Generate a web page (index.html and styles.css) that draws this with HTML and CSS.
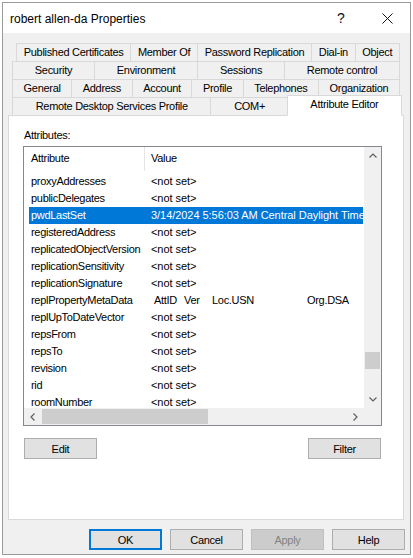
FILE: index.html
```html
<!DOCTYPE html>
<html lang="en">
  <head>
    <meta charset="UTF-8" />
    <meta name="viewport" content="width=device-width, initial-scale=1.0" />
    <title>robert allen-da Properties</title>
    <link rel="stylesheet" href="styles.css">
  </head>
  <body>
    <div class="behind"><span>Users</span></div>
    <div class="window">
      <div class="titlebar">
        <span class="title">robert allen-da Properties</span>
        <span class="caption-btn">?</span>
        <span class="caption-btn">
          <svg width="11" height="11" viewBox="0 0 11 11">
            <path d="M0.5 0.5 L10.5 10.5 M10.5 0.5 L0.5 10.5" stroke="#111" stroke-width="1" fill="none" />
          </svg>
        </span>
      </div>

      <div class="dialog">
        <div class="tabs">
          <div class="tab-row row-top">
            <div class="tab">Published Certificates</div>
            <div class="tab">Member Of</div>
            <div class="tab">Password Replication</div>
            <div class="tab">Dial-in</div>
            <div class="tab">Object</div>
          </div>
          <div class="tab-row">
            <div class="tab">Security</div>
            <div class="tab">Environment</div>
            <div class="tab">Sessions</div>
            <div class="tab">Remote control</div>
          </div>
          <div class="tab-row">
            <div class="tab">General</div>
            <div class="tab">Address</div>
            <div class="tab">Account</div>
            <div class="tab">Profile</div>
            <div class="tab">Telephones</div>
            <div class="tab">Organization</div>
          </div>
          <div class="tab-row">
            <div class="tab">Remote Desktop Services Profile</div>
            <div class="tab">COM+</div>
            <div class="tab active">Attribute Editor</div>
          </div>
        </div>

        <div class="panel">
          <div class="field-label">Attributes:</div>
          <div class="listbox">
            <div class="viewport">
              <div class="list-header">
                <div class="head-attr">Attribute</div>
                <div class="head-value">Value</div>
              </div>
              <div class="list-row"><span class="cell-attr">proxyAddresses</span><span class="cell-value">&lt;not set&gt;</span></div>
              <div class="list-row"><span class="cell-attr">publicDelegates</span><span class="cell-value">&lt;not set&gt;</span></div>
              <div class="list-row selected"><span class="cell-attr">pwdLastSet</span><span class="cell-value">3/14/2024 5:56:03 AM Central Daylight Time</span></div>
              <div class="list-row"><span class="cell-attr">registeredAddress</span><span class="cell-value">&lt;not set&gt;</span></div>
              <div class="list-row"><span class="cell-attr">replicatedObjectVersion</span><span class="cell-value">&lt;not set&gt;</span></div>
              <div class="list-row"><span class="cell-attr">replicationSensitivity</span><span class="cell-value">&lt;not set&gt;</span></div>
              <div class="list-row"><span class="cell-attr">replicationSignature</span><span class="cell-value">&lt;not set&gt;</span></div>
              <div class="list-row">
                <span class="cell-attr">replPropertyMetaData</span>
                <span class="cell-value meta">
                  <span class="meta-id">AttID</span><span class="meta-ver">Ver</span><span class="meta-usn">Loc.USN</span><span>Org.DSA</span>
                </span>
              </div>
              <div class="list-row"><span class="cell-attr">replUpToDateVector</span><span class="cell-value">&lt;not set&gt;</span></div>
              <div class="list-row"><span class="cell-attr">repsFrom</span><span class="cell-value">&lt;not set&gt;</span></div>
              <div class="list-row"><span class="cell-attr">repsTo</span><span class="cell-value">&lt;not set&gt;</span></div>
              <div class="list-row"><span class="cell-attr">revision</span><span class="cell-value">&lt;not set&gt;</span></div>
              <div class="list-row"><span class="cell-attr">rid</span><span class="cell-value">&lt;not set&gt;</span></div>
              <div class="list-row"><span class="cell-attr">roomNumber</span><span class="cell-value">&lt;not set&gt;</span></div>
            </div>

            <div class="vscroll">
              <div class="arrow">
                <svg width="8" height="5" viewBox="0 0 8 5"><polyline points="0.5,4.5 4,1 7.5,4.5" fill="none" stroke="#606060" stroke-width="1.2" /></svg>
              </div>
              <div class="track">
                <div class="thumb" style="margin-top: 188px"></div>
              </div>
              <div class="arrow">
                <svg width="8" height="5" viewBox="0 0 8 5"><polyline points="0.5,0.5 4,4 7.5,0.5" fill="none" stroke="#606060" stroke-width="1.2" /></svg>
              </div>
            </div>

            <div class="hscroll">
              <div class="arrow">
                <svg width="5" height="8" viewBox="0 0 5 8"><polyline points="4.5,0.5 1,4 4.5,7.5" fill="none" stroke="#606060" stroke-width="1.2" /></svg>
              </div>
              <div class="track">
                <div class="thumb" style="width: 166px"></div>
              </div>
              <div class="arrow">
                <svg width="5" height="8" viewBox="0 0 5 8"><polyline points="0.5,0.5 4,4 0.5,7.5" fill="none" stroke="#606060" stroke-width="1.2" /></svg>
              </div>
            </div>

            <div class="corner"></div>
          </div>

          <div class="panel-actions">
            <button class="btn">Edit</button>
            <button class="btn">Filter</button>
          </div>
        </div>

        <div class="dialog-actions">
          <button class="btn default">OK</button>
          <button class="btn">Cancel</button>
          <button class="btn" disabled>Apply</button>
          <button class="btn">Help</button>
        </div>
      </div>
    </div>
  </body>
</html>
```

FILE: styles.css
```css
* {
  box-sizing: border-box;
}

body {
  margin: 0;
  background-color: #ffffff;
  font-family: "Liberation Sans", Arial, sans-serif;
  font-size: 11px;
  letter-spacing: -0.3px;
  color: #000000;
}

.behind {
  height: 2px;
  overflow: hidden;
  padding-left: 137px;
}

.behind span {
  display: block;
  margin-top: -11px;
  font-size: 12px;
  line-height: 14px;
  color: #333333;
}

.window {
  margin: 0 2px 0 2px;
  border: 1px solid #9a9a9a;
  background-color: #f0f0f0;
}

/* title bar */
.titlebar {
  display: flex;
  align-items: center;
  height: 30px;
  background-color: #ffffff;
}

.title {
  flex: 1;
  padding-left: 7px;
  padding-top: 1px;
  font-size: 12px;
  letter-spacing: 0;
  color: #000000;
}

.caption-btn {
  display: flex;
  align-items: center;
  justify-content: center;
  width: 46px;
  height: 30px;
  font-size: 14px;
  letter-spacing: 0;
  color: #111111;
}

/* dialog body */
.dialog {
  padding: 10px 6px 4px 5px;
}

.tabs {
  display: flex;
  flex-direction: column;
}

.tab-row {
  display: flex;
  height: 19px;
  margin: -1px 4px 0 4px;
}

.tab-row.row-top {
  margin-top: 0;
  margin-left: 8px;
}

.tab {
  flex: 1 1 auto;
  display: flex;
  align-items: center;
  justify-content: center;
  padding: 0 5px 1px;
  border: 1px solid #d9d9d9;
  border-left: none;
  background-color: #f0f0f0;
  white-space: nowrap;
}

.tab:first-child {
  border-left: 1px solid #d9d9d9;
}

.tab.active {
  position: relative;
  z-index: 1;
  margin: -2px -2px 0 -2px;
  padding-bottom: 4px;
  border-left: 1px solid #d9d9d9;
  border-bottom-color: #ffffff;
  background-color: #ffffff;
}

.panel {
  height: 405px;
  margin-top: -1px;
  padding: 12px 22px 0 15px;
  border: 1px solid #d9d9d9;
  background-color: #ffffff;
}

.field-label {
  height: 14px;
  line-height: 14px;
}

/* list view */
.listbox {
  display: grid;
  grid-template-columns: 1fr 17px;
  grid-template-rows: 1fr 17px;
  height: 280px;
  margin: 4px -1px 0 -1px;
  border: 1px solid #828790;
  background-color: #ffffff;
}

.viewport {
  overflow: hidden;
}

.list-header {
  display: flex;
  height: 24px;
  margin-bottom: 2px;
  line-height: 23px;
}

.head-attr {
  width: 121px;
  padding-left: 7px;
  border-right: 1px solid #e5e5e5;
}

.head-value {
  padding-left: 6px;
}

.list-row {
  display: flex;
  height: 17px;
  margin: 0 1px 0 5px;
  line-height: 16px;
  white-space: nowrap;
  overflow: hidden;
}

.list-row.selected {
  background-color: #0078d7;
  color: #ffffff;
}

.cell-attr {
  flex: none;
  width: 115px;
  padding-left: 2px;
  overflow: hidden;
}

.cell-value {
  padding-left: 7px;
  letter-spacing: -0.05px;
}

.meta {
  display: flex;
  padding-left: 10px;
  letter-spacing: -0.3px;
}

.meta-id {
  width: 30px;
}

.meta-ver {
  width: 28px;
}

.meta-usn {
  width: 95px;
}

/* scroll bars */
.vscroll,
.hscroll {
  display: flex;
  background-color: #f0f0f0;
}

.vscroll {
  flex-direction: column;
}

.vscroll .arrow,
.hscroll .arrow {
  flex: none;
  display: flex;
  align-items: center;
  justify-content: center;
  width: 17px;
  height: 17px;
}

.vscroll .track,
.hscroll .track {
  flex: 1;
  display: flex;
}

.vscroll .track {
  flex-direction: column;
}

.vscroll .thumb {
  height: 17px;
  margin-left: 1px;
  margin-right: 1px;
  background-color: #cdcdcd;
}

.hscroll .thumb {
  margin: 1px 0 1px 1px;
  background-color: #cdcdcd;
}

.corner {
  background-color: #f0f0f0;
}

/* buttons */
.panel-actions {
  display: flex;
  justify-content: space-between;
  margin: 12px 0 0 0;
}

.dialog-actions {
  display: flex;
  justify-content: flex-end;
  gap: 8px;
  margin: 9px -1px 0 0;
}

.btn {
  width: 73px;
  height: 21px;
  padding: 0;
  border: 1px solid #adadad;
  background-color: #e1e1e1;
  font-family: "Liberation Sans", Arial, sans-serif;
  font-size: 11px;
  letter-spacing: -0.3px;
  color: #000000;
}

.btn.default {
  border-color: #0078d7;
  box-shadow: inset 0 0 0 1px #0078d7;
}

.btn:disabled {
  border-color: #bfbfbf;
  background-color: #cccccc;
  color: #838383;
}
```
